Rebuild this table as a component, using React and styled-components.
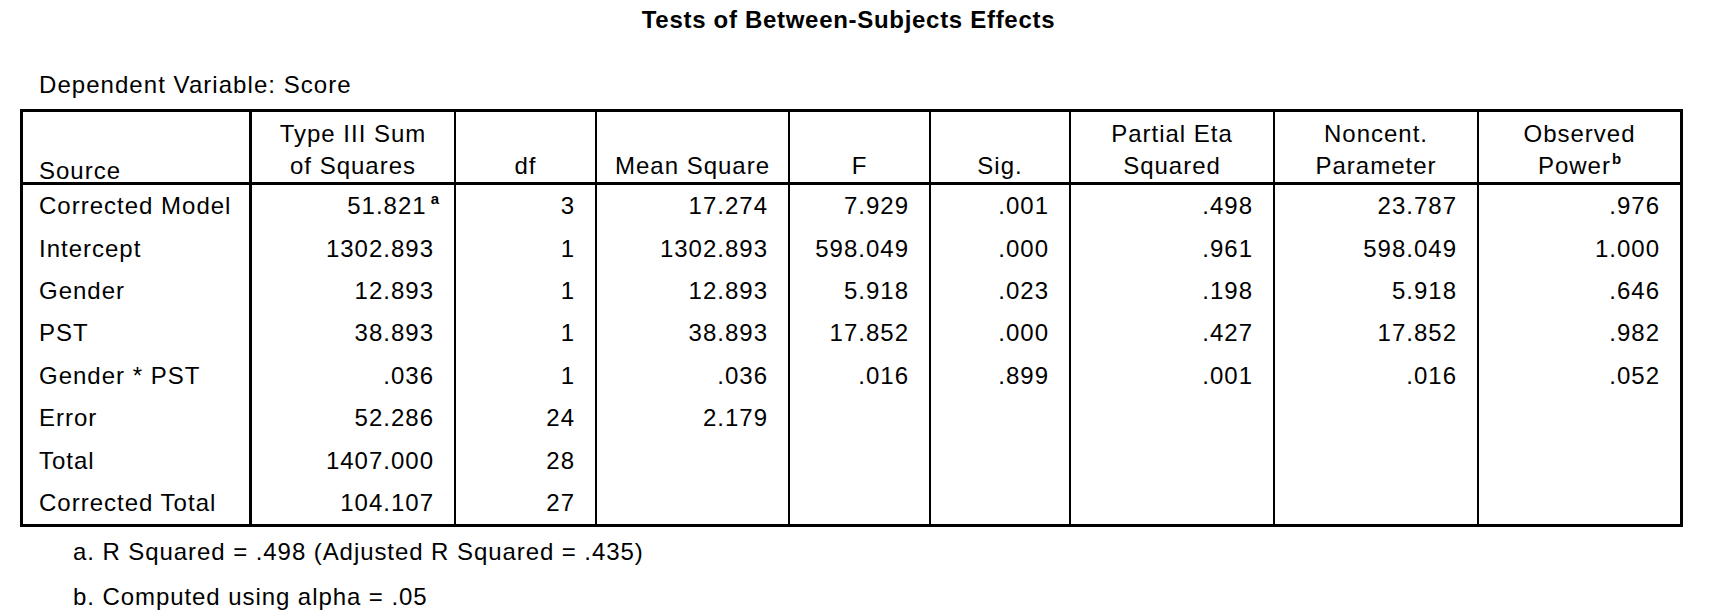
import React from 'react';
import styled, { createGlobalStyle } from 'styled-components';

const GlobalStyle = createGlobalStyle`
  html, body {
    margin: 0;
    padding: 0;
    background: #ffffff;
  }
  body {
    font-family: "Liberation Sans", Arial, sans-serif;
    color: #000000;
  }
`;

const Page = styled.div`
  width: 1712px;
  height: 616px;
  box-sizing: border-box;
  padding: 4px 0 0 20px;
  overflow: hidden;
`;

const Output = styled.div`
  width: 1663px;
  display: flex;
  flex-direction: column;
`;

const Title = styled.div`
  text-align: center;
  font-weight: bold;
  font-size: 24px;
  letter-spacing: 0.7px;
  line-height: 32px;
  padding-right: 6px;
`;

const Caption = styled.div`
  margin-top: 33px;
  padding-left: 19px;
  font-size: 24px;
  letter-spacing: 1.05px;
  line-height: 32px;
`;

const Table = styled.table`
  margin-top: 8px;
  width: 1663px;
  table-layout: fixed;
  border-collapse: separate;
  border-spacing: 0;
  border: 3px solid #000;
  font-size: 24px;
  letter-spacing: 1px;
`;

const HeadRow = styled.tr`
  height: 73px;
`;

const BodyRow = styled.tr`
  height: 42.4px;
`;

const HeadCell = styled.th`
  padding: 0 ${p => (p.$left ? '0 1px 16px' : '4px 0 4px')};
  vertical-align: bottom;
  text-align: ${p => (p.$left ? 'left' : 'center')};
  font-weight: normal;
  line-height: ${p => (p.$left ? '20px' : '32px')};
  white-space: nowrap;
  border-bottom: 3px solid #000;
  border-right: ${p => (p.$thick ? '3px' : '2px')} solid #000;
  &:last-child {
    border-right: none;
  }
`;

const LabelCell = styled.th`
  padding: 0 0 0 16px;
  text-align: left;
  font-weight: normal;
  vertical-align: middle;
  white-space: nowrap;
  border-right: 3px solid #000;
`;

const NumCell = styled.td`
  padding: 0 20px 0 0;
  text-align: right;
  vertical-align: middle;
  white-space: nowrap;
  border-right: 2px solid #000;
  &:last-child {
    border-right: none;
  }
`;

const Marker = styled.sup`
  font-size: 15px;
  font-weight: bold;
  line-height: 0;
  letter-spacing: 0;
  vertical-align: 10px;
  margin-left: ${p => (p.$tight ? '1px' : '4px')};
  margin-right: ${p => (p.$tight ? '0' : '-5px')};
`;

const Footnotes = styled.div`
  margin-top: 2px;
  padding-left: 53px;
  font-size: 24px;
  letter-spacing: 0.93px;
  line-height: 45px;
`;

const Footnote = styled.div``;

const widths = [229, 204, 141, 193, 141, 140, 204, 204, 201];

const rows = [
  { label: 'Corrected Model', values: ['51.821', '3', '17.274', '7.929', '.001', '.498', '23.787', '.976'], mark: 'a' },
  { label: 'Intercept', values: ['1302.893', '1', '1302.893', '598.049', '.000', '.961', '598.049', '1.000'] },
  { label: 'Gender', values: ['12.893', '1', '12.893', '5.918', '.023', '.198', '5.918', '.646'] },
  { label: 'PST', values: ['38.893', '1', '38.893', '17.852', '.000', '.427', '17.852', '.982'] },
  { label: 'Gender * PST', values: ['.036', '1', '.036', '.016', '.899', '.001', '.016', '.052'] },
  { label: 'Error', values: ['52.286', '24', '2.179', '', '', '', '', ''] },
  { label: 'Total', values: ['1407.000', '28', '', '', '', '', '', ''] },
  { label: 'Corrected Total', values: ['104.107', '27', '', '', '', '', '', ''] },
];

export default function App() {
  return (
    <Page>
      <GlobalStyle />
      <Output>
        <Title>Tests of Between-Subjects Effects</Title>
        <Caption>Dependent Variable: Score</Caption>
        <Table>
          <colgroup>
            {widths.map((w, i) => (
              <col key={i} style={{ width: `${w}px` }} />
            ))}
          </colgroup>
          <thead>
            <HeadRow>
              <HeadCell $left $thick>Source</HeadCell>
              <HeadCell>Type III Sum<br />of Squares</HeadCell>
              <HeadCell>df</HeadCell>
              <HeadCell>Mean Square</HeadCell>
              <HeadCell>F</HeadCell>
              <HeadCell>Sig.</HeadCell>
              <HeadCell>Partial Eta<br />Squared</HeadCell>
              <HeadCell>Noncent.<br />Parameter</HeadCell>
              <HeadCell>Observed<br />Power<Marker $tight>b</Marker></HeadCell>
            </HeadRow>
          </thead>
          <tbody>
            {rows.map(r => (
              <BodyRow key={r.label}>
                <LabelCell>{r.label}</LabelCell>
                {r.values.map((v, i) => (
                  <NumCell key={i}>
                    {v}
                    {i === 0 && r.mark ? <Marker>{r.mark}</Marker> : null}
                  </NumCell>
                ))}
              </BodyRow>
            ))}
          </tbody>
        </Table>
        <Footnotes>
          <Footnote>a. R Squared = .498 (Adjusted R Squared = .435)</Footnote>
          <Footnote>b. Computed using alpha = .05</Footnote>
        </Footnotes>
      </Output>
    </Page>
  );
}
